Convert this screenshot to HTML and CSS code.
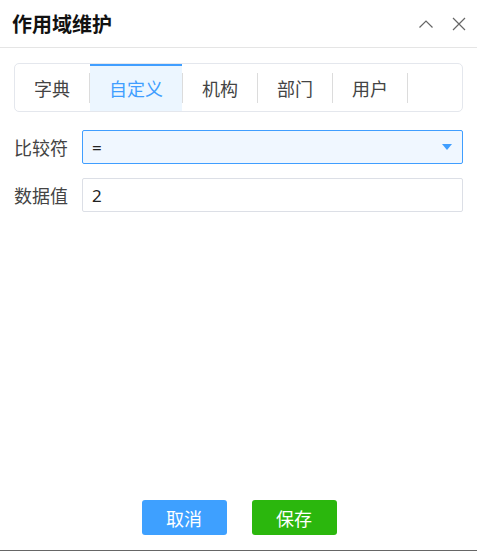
FILE: index.html
```html
<!DOCTYPE html>
<html lang="zh">
<head>
<meta charset="utf-8">
<title>作用域维护</title>
<link rel="stylesheet" href="styles.css">
</head>
<body>
<div class="dialog">
  <div class="header">
    <div class="title">作用域维护</div>
    <div class="tools">
      <svg class="icon" width="16" height="16" viewBox="0 0 16 16"><path d="M1.5 11.5 L8 5 L14.5 11.5" fill="none" stroke="#666" stroke-width="1.2"/></svg>
      <svg class="icon" width="16" height="16" viewBox="0 0 16 16"><path d="M2 2 L14 14 M14 2 L2 14" fill="none" stroke="#666" stroke-width="1.2"/></svg>
    </div>
  </div>
  <div class="body">
    <div class="tabs">
      <div class="tab">字典</div><span class="sep"></span>
      <div class="tab active">自定义</div><span class="sep"></span>
      <div class="tab">机构</div><span class="sep"></span>
      <div class="tab">部门</div><span class="sep"></span>
      <div class="tab">用户</div><span class="sep"></span>
    </div>
    <div class="form">
      <div class="row">
        <div class="label">比较符</div>
        <div class="field select"><span>=</span><span class="arrow"></span></div>
      </div>
      <div class="row">
        <div class="label">数据值</div>
        <div class="field"><span>2</span></div>
      </div>
    </div>
  </div>
  <div class="footer">
    <button class="btn cancel">取消</button>
    <button class="btn save">保存</button>
  </div>
</div>
</body>
</html>
```
FILE: styles.css
```css
* { box-sizing: border-box; }
html, body { margin: 0; padding: 0; }
body {
  font-family: "Noto Sans CJK SC", "Noto Sans", sans-serif;
  background: #fff;
  color: #333;
}
.dialog {
  width: 477px;
  height: 551px;
  display: flex;
  flex-direction: column;
  border-bottom: 1px solid #666;
  background: #fff;
}
.header {
  height: 48px;
  border-bottom: 1px solid #e5e5e5;
  display: flex;
  align-items: center;
  justify-content: space-between;
  padding: 0 10px 0 12px;
}
.title {
  font-size: 20px;
  font-weight: bold;
  color: #111;
  line-height: 1;
}
.tools {
  display: flex;
  gap: 17px;
  align-items: center;
}
.icon { display: block; }
.body {
  flex: 1;
  padding: 15px 14px 0 14px;
}
.tabs {
  height: 49px;
  border: 1px solid #e4e7ed;
  border-radius: 5px;
  display: flex;
  align-items: stretch;
}
.tab {
  padding: 0 19px;
  font-size: 18px;
  color: #444;
  display: flex;
  align-items: center;
  line-height: 1;
}
.tab.active {
  background: #ecf6ff;
  color: #409eff;
  border-top: 2px solid #409eff;
  padding-bottom: 2px;
}
.sep {
  width: 1px;
  height: 30px;
  align-self: center;
  background: #dcdcdc;
}
.form {
  margin-top: 18px;
  display: flex;
  flex-direction: column;
  gap: 14px;
}
.row {
  display: flex;
  align-items: center;
  gap: 14px;
}
.label {
  width: 54px;
  font-size: 18px;
  color: #444;
  white-space: nowrap;
}
.field {
  flex: 1;
  height: 34px;
  border: 1px solid #dcdfe6;
  border-radius: 2px;
  display: flex;
  align-items: center;
  justify-content: space-between;
  padding: 0 10px 0 9px;
  font-size: 17px;
  color: #222;
  font-family: "Noto Sans", sans-serif;
}
.select {
  border-color: #409eff;
  background: #f0f7ff;
}
.arrow {
  width: 0;
  height: 0;
  border-left: 5px solid transparent;
  border-right: 5px solid transparent;
  border-top: 6px solid #409eff;
}
.footer {
  display: flex;
  justify-content: center;
  gap: 25px;
  padding: 0 0 15px 1px;
}
.btn {
  width: 85px;
  height: 35px;
  border: none;
  border-radius: 3px;
  color: #fff;
  font-size: 18px;
  font-family: "Noto Sans CJK SC", sans-serif;
  padding: 0;
  line-height: 1;
}
.cancel { background: #3ea0ff; }
.save { background: #2bb70d; }
```
